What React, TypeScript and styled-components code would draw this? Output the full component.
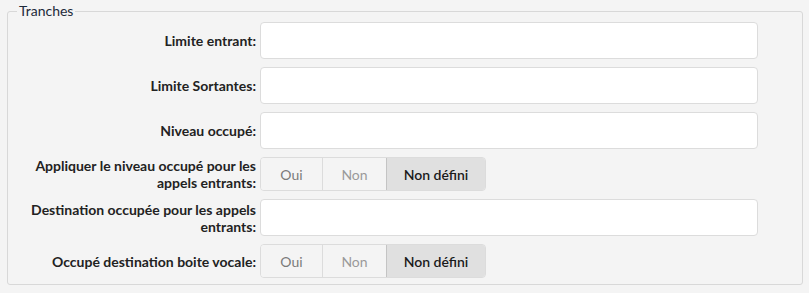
import React, { useState } from "react";
import styled, { createGlobalStyle } from "styled-components";

const GlobalStyle = createGlobalStyle`
  html, body {
    margin: 0;
    padding: 0;
    background: #f4f4f4;
    font-family: Lato, "Liberation Sans", sans-serif;
    font-size: 14px;
    color: #222;
  }
`;

const Page = styled.div`
  padding: 3px 6px 8px 7px;
`;

const Fieldset = styled.fieldset`
  margin: 0;
  padding: 3px 0 6px 0;
  border: 1px solid #d8d8d8;
  border-radius: 3px;
`;

const Legend = styled.legend`
  margin-left: 9px;
  padding: 0 2px;
  font-size: 14px;
  color: #1d2a3a;
  line-height: 16px;
`;

const Form = styled.div`
  display: flex;
  flex-direction: column;
  gap: 8px;
`;

const Row = styled.div`
  display: grid;
  grid-template-columns: 248px 498px;
  column-gap: 4px;
  align-items: center;
`;

const Label = styled.label`
  font-weight: 700;
  text-align: right;
  line-height: 17px;
  color: #222;
`;

const TextInput = styled.input`
  box-sizing: border-box;
  display: block;
  height: 37px;
  width: 100%;
  margin: 0;
  border: 1px solid #dcdcdc;
  border-radius: 4px;
  background: #fff;
  font-family: inherit;
  font-size: 14px;
  padding: 0 10px;
  outline: none;
`;

const Toggle = styled.div`
  display: flex;
  width: 226px;
  height: 34px;
  box-sizing: border-box;
  border: 1px solid #dcdcdc;
  border-radius: 4px;
  overflow: hidden;
`;

const ToggleButton = styled.button<{ $w: number; $active?: boolean; $tone?: string }>`
  width: ${(p) => p.$w}px;
  border: none;
  border-left: 1px solid ${(p) => (p.$active ? "#c4c4c4" : "#dcdcdc")};
  background: ${(p) => (p.$active ? "#e0e0e0" : "#f4f4f4")};
  color: ${(p) => (p.$active ? "#1a1a1a" : p.$tone || "#777")};
  font-family: inherit;
  font-size: 14px;
  font-weight: ${(p) => (p.$active ? 600 : 400)};
  padding: 0;
  cursor: pointer;
  &:first-child {
    border-left: none;
  }
`;

const options = [
  { label: "Oui", w: 61, tone: "#7a7a7a" },
  { label: "Non", w: 64, tone: "#9a9a9a" },
  { label: "Non défini", w: 99, tone: "#777" },
];

const Segmented: React.FC = () => {
  const [value, setValue] = useState("Non défini");
  return (
    <Toggle>
      {options.map((o) => (
        <ToggleButton
          key={o.label}
          $w={o.w}
          $tone={o.tone}
          $active={value === o.label}
          onClick={() => setValue(o.label)}
        >
          {o.label}
        </ToggleButton>
      ))}
    </Toggle>
  );
};

const App: React.FC = () => (
  <Page>
    <GlobalStyle />
    <Fieldset>
      <Legend>Tranches</Legend>
      <Form>
        <Row>
          <Label>Limite entrant:</Label>
          <TextInput />
        </Row>
        <Row>
          <Label>Limite Sortantes:</Label>
          <TextInput />
        </Row>
        <Row>
          <Label>Niveau occupé:</Label>
          <TextInput />
        </Row>
        <Row>
          <Label>
            Appliquer le niveau occupé pour les
            <br />
            appels entrants:
          </Label>
          <Segmented />
        </Row>
        <Row>
          <Label>
            Destination occupée pour les appels
            <br />
            entrants:
          </Label>
          <TextInput />
        </Row>
        <Row>
          <Label>Occupé destination boite vocale:</Label>
          <Segmented />
        </Row>
      </Form>
    </Fieldset>
  </Page>
);

export default App;
